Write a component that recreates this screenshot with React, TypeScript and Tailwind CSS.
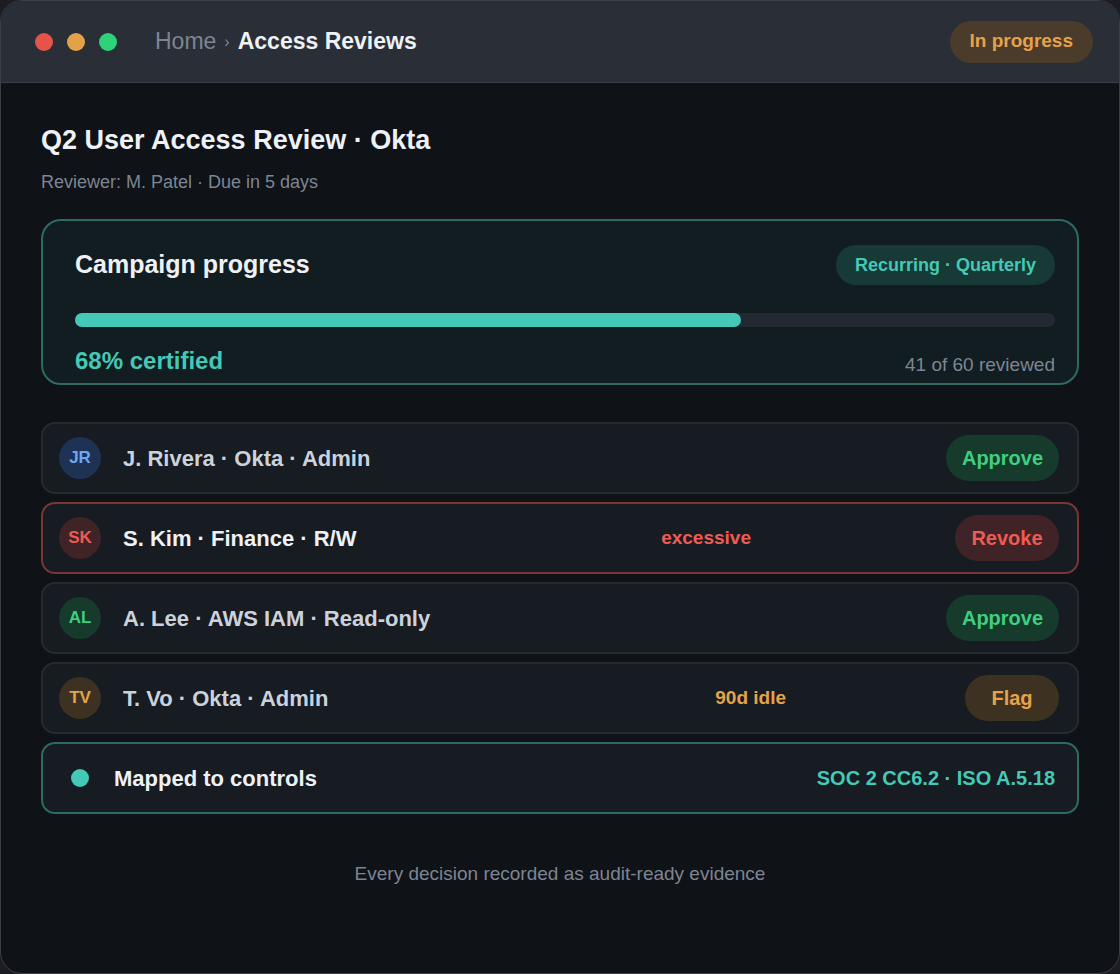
const font = { fontFamily: '"Liberation Sans", Arial, sans-serif' };

type Row = {
  ini: string; av: string; avText: string; name: string; nameCls: string;
  tag?: string; tagCls?: string; btn: string; btnCls: string; border: string;
};

const rows: Row[] = [
  { ini: "JR", av: "bg-[#1e3354]", avText: "text-[#6ea8f5]", name: "J. Rivera · Okta · Admin", nameCls: "text-[#cbd2dc]", btn: "Approve", btnCls: "bg-[#163a2c] text-[#3fcf7f] w-[113px]", border: "border-[#262a31]" },
  { ini: "SK", av: "bg-[#3f2326]", avText: "text-[#ef5b52]", name: "S. Kim · Finance · R/W", nameCls: "text-[#eef1f5]", tag: "excessive", tagCls: "text-[#ef5b52] mr-[204px]", btn: "Revoke", btnCls: "bg-[#3f2326] text-[#ef5b52] w-[104px]", border: "border-[#7a3535]" },
  { ini: "AL", av: "bg-[#163a2c]", avText: "text-[#3fcf7f]", name: "A. Lee · AWS IAM · Read-only", nameCls: "text-[#cbd2dc]", btn: "Approve", btnCls: "bg-[#163a2c] text-[#3fcf7f] w-[113px]", border: "border-[#262a31]" },
  { ini: "TV", av: "bg-[#3d3222]", avText: "text-[#e6a24a]", name: "T. Vo · Okta · Admin", nameCls: "text-[#cbd2dc]", tag: "90d idle", tagCls: "text-[#e6a24a] mr-[179px]", btn: "Flag", btnCls: "bg-[#3d3222] text-[#e6a24a] w-[94px]", border: "border-[#262a31]" },
];

export default function App() {
  return (
    <div style={font} className="w-[1120px] h-[974px] bg-[#1b1d22]">
      <div className="h-full rounded-[22px] border border-[#3a3e46] overflow-hidden bg-[#0f1216] flex flex-col">
        <div className="h-[82px] shrink-0 bg-[#2a2e36] border-b border-[#3a3e46] flex items-center pl-[34px] pr-[26px]">
          <div className="flex gap-[14px]">
            <span className="w-[18px] h-[18px] rounded-full bg-[#e5534b]" />
            <span className="w-[18px] h-[18px] rounded-full bg-[#e3a24a]" />
            <span className="w-[18px] h-[18px] rounded-full bg-[#2fd17a]" />
          </div>
          <div className="ml-[38px] text-[23px] flex items-center">
            <span className="text-[#7d8594]">Home</span>
            <span className="text-[#7d8594] mx-[8px] text-[16px]">›</span>
            <span className="text-[#eef1f5] font-bold">Access Reviews</span>
          </div>
          <div className="ml-auto h-[42px] px-[20px] rounded-full bg-[#4a3b2a] text-[#e6a24a] text-[19px] font-bold flex items-center">In progress</div>
        </div>
        <div className="px-[40px] pt-[40px] flex flex-col">
          <div className="text-[27px] font-bold text-[#eef1f5] leading-[34px]">Q2 User Access Review · Okta</div>
          <div className="mt-[12px] text-[18px] text-[#7d8594]">Reviewer: M. Patel · Due in 5 days</div>
          <div className="mt-[23px] h-[166px] rounded-[20px] border-2 border-[#2b6b63] bg-[#121d21] pl-[32px] pr-[22px] pt-[24px]">
            <div className="flex items-center justify-between">
              <span className="text-[25px] font-bold text-[#eef1f5]">Campaign progress</span>
              <span className="h-[40px] px-[19px] rounded-full bg-[#173a36] text-[#43c9b5] text-[18px] font-bold flex items-center">Recurring · Quarterly</span>
            </div>
            <div className="mt-[28px] h-[14px] rounded-full bg-[#232933]">
              <div className="h-full w-[68%] rounded-full bg-[#43c9b5]" />
            </div>
            <div className="mt-[16px] flex items-end justify-between">
              <span className="text-[24px] font-bold text-[#43c9b5]">68% certified</span>
              <span className="text-[19px] text-[#7d8594]">41 of 60 reviewed</span>
            </div>
          </div>
          <div className="mt-[37px] flex flex-col gap-[8px]">
            {rows.map((r) => (
              <div key={r.ini} className={`h-[72px] rounded-[14px] border-2 ${r.border} bg-[#171b22] flex items-center pl-[16px] pr-[18px]`}>
                <span className={`w-[42px] h-[42px] rounded-full ${r.av} ${r.avText} text-[17px] font-bold flex items-center justify-center`}>{r.ini}</span>
                <span className={`ml-[22px] text-[22px] font-bold ${r.nameCls}`}>{r.name}</span>
                {r.tag && <span className={`ml-auto text-[19px] font-bold ${r.tagCls}`}>{r.tag}</span>}
                <span className={`${r.tag ? "" : "ml-auto"} h-[46px] rounded-full ${r.btnCls} text-[20px] font-bold flex items-center justify-center`}>{r.btn}</span>
              </div>
            ))}
            <div className="h-[72px] rounded-[14px] border-2 border-[#2b6b63] bg-[#171b22] flex items-center pl-[28px] pr-[22px]">
              <span className="w-[18px] h-[18px] rounded-full bg-[#43c9b5]" />
              <span className="ml-[25px] text-[22px] font-bold text-[#eef1f5]">Mapped to controls</span>
              <span className="ml-auto text-[20px] font-bold text-[#43c9b5]">SOC 2 CC6.2 · ISO A.5.18</span>
            </div>
          </div>
          <div className="mt-[46px] text-center text-[19px] text-[#7d8594]">Every decision recorded as audit-ready evidence</div>
        </div>
      </div>
    </div>
  );
}
